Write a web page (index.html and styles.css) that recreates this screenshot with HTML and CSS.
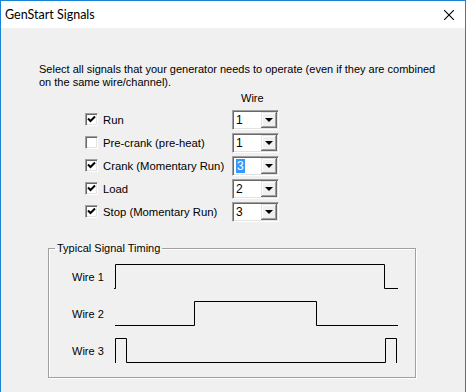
FILE: index.html
```html
<!DOCTYPE html>
<html lang="en">
<head>
    <meta charset="UTF-8">
    <title>GenStart Signals</title>
    <link rel="stylesheet" href="styles.css">
</head>
<body>
    <div class="window">
        <div class="titlebar">
            <span class="title">GenStart Signals</span>
            <svg class="close" width="10" height="10" viewBox="0 0 10 10">
                <path d="M0 0L10 10M10 0L0 10" stroke="#000" stroke-width="1.1" fill="none"/>
            </svg>
        </div>

        <div class="content">
            <p class="intro">Select all signals that your generator needs to operate (even if they are combined<br>on the same wire/channel).</p>
            <div class="wire-head">Wire</div>

            <ul class="sig-list">
                <li class="sig">
                    <span class="cb"><svg width="9" height="9" viewBox="0 0 9 9"><path d="M1 3.5L3.5 6L8 1.5" stroke="#000" stroke-width="2" fill="none"/></svg></span>
                    <span class="sig-name">Run</span>
                    <span class="combo"><span class="combo-val">1</span><span class="combo-btn"><i></i></span></span>
                </li>
                <li class="sig">
                    <span class="cb"></span>
                    <span class="sig-name">Pre-crank (pre-heat)</span>
                    <span class="combo"><span class="combo-val">1</span><span class="combo-btn"><i></i></span></span>
                </li>
                <li class="sig">
                    <span class="cb"><svg width="9" height="9" viewBox="0 0 9 9"><path d="M1 3.5L3.5 6L8 1.5" stroke="#000" stroke-width="2" fill="none"/></svg></span>
                    <span class="sig-name">Crank (Momentary Run)</span>
                    <span class="combo"><span class="combo-val"><span class="sel">3</span></span><span class="combo-btn"><i></i></span></span>
                </li>
                <li class="sig">
                    <span class="cb"><svg width="9" height="9" viewBox="0 0 9 9"><path d="M1 3.5L3.5 6L8 1.5" stroke="#000" stroke-width="2" fill="none"/></svg></span>
                    <span class="sig-name">Load</span>
                    <span class="combo"><span class="combo-val">2</span><span class="combo-btn"><i></i></span></span>
                </li>
                <li class="sig">
                    <span class="cb"><svg width="9" height="9" viewBox="0 0 9 9"><path d="M1 3.5L3.5 6L8 1.5" stroke="#000" stroke-width="2" fill="none"/></svg></span>
                    <span class="sig-name">Stop (Momentary Run)</span>
                    <span class="combo"><span class="combo-val">3</span><span class="combo-btn"><i></i></span></span>
                </li>
            </ul>

            <fieldset class="group">
                <legend>Typical Signal Timing</legend>
                <div class="wave-row">
                    <span class="wave-label">Wire 1</span>
                    <svg class="wave" width="284" height="27" viewBox="0 0 284 27">
                        <path d="M-1 25.5H0.5V1.5H269.5V25.5H283"/>
                    </svg>
                </div>
                <div class="wave-row">
                    <span class="wave-label">Wire 2</span>
                    <svg class="wave" width="284" height="27" viewBox="0 0 284 27">
                        <path d="M0 25.5H79.5V1.5H201.5V25.5H283"/>
                    </svg>
                </div>
                <div class="wave-row">
                    <span class="wave-label">Wire 3</span>
                    <svg class="wave" width="284" height="27" viewBox="0 0 284 27">
                        <path d="M0.5 26V1.5H11.5V25.5H270.5V1.5H281.5V26"/>
                    </svg>
                </div>
            </fieldset>
        </div>
    </div>
</body>
</html>
```

FILE: styles.css
```css
*{
    margin: 0;
    padding: 0;
    box-sizing: border-box;
}
ul{
    list-style: none;
}
body{
    width: 466px;
    height: 392px;
    overflow: hidden;
    font-family: "Liberation Sans", Arial, sans-serif;
    font-size: 11px;
    color: #000;
}
.window{
    height: 392px;
    border: 1px solid #1883d7;
    border-bottom: none;
    background: #f0f0f0;
}
.titlebar{
    height: 27px;
    background: #fff;
    display: flex;
    align-items: center;
    justify-content: space-between;
    padding: 0 11px 0 4px;
}
.title{
    font-family: Lato, "Noto Sans", sans-serif;
    font-size: 12.5px;
}
.content{
    padding-top: 35px;
}
.intro{
    padding-left: 38px;
    line-height: 13px;
}
.wire-head{
    margin: 3px 0 0 240px;
    line-height: 13px;
}
.sig-list{
    margin-top: 3px;
}
.sig{
    display: flex;
    align-items: center;
    height: 23px;
    padding-left: 84px;
}
.cb{
    width: 13px;
    height: 13px;
    background: #fff;
    border: 1px solid;
    border-color: #a0a0a0 #fff #fff #a0a0a0;
    box-shadow: inset 1px 1px 0 #696969, inset -1px -1px 0 #e3e3e3;
    display: flex;
    align-items: center;
    justify-content: center;
}
.cb svg{
    display: block;
}
.sig-name{
    width: 129px;
    margin-left: 5px;
    font-size: 11.3px;
}
.combo{
    width: 47px;
    height: 20px;
    background: #fff;
    border: 1px solid;
    border-color: #a0a0a0 #fff #fff #a0a0a0;
    box-shadow: inset 1px 1px 0 #696969, inset -1px -1px 0 #e3e3e3;
    display: flex;
    padding: 1px;
}
.combo-val{
    flex: 1;
    padding-left: 2px;
    line-height: 16px;
    font-size: 12px;
}
.sel{
    background: #3399ff;
    color: #fff;
    padding: 0 1px;
}
.combo-btn{
    width: 16px;
    height: 16px;
    background: #f0f0f0;
    box-shadow: inset -1px -1px 0 #696969, inset 1px 1px 0 #e3e3e3, inset -2px -2px 0 #a0a0a0, inset 2px 2px 0 #fff;
    display: flex;
    align-items: center;
    justify-content: center;
}
.combo-btn i{
    width: 0;
    height: 0;
    border-left: 4px solid transparent;
    border-right: 4px solid transparent;
    border-top: 4px solid #000;
    margin-top: 1px;
}
.group{
    margin: 19px 0 0 47px;
    width: 368px;
    border: 1px solid #a0a0a0;
    box-shadow: 1px 1px 0 #fff, inset 1px 1px 0 #fff;
    padding: 0 0 8px 6px;
    min-width: 0;
}
.group legend{
    padding: 0 2px;
    line-height: 13px;
}
.wave-row{
    display: flex;
    align-items: center;
    height: 37px;
    margin-left: 17px;
}
.wave-row:first-of-type{
    margin-top: 3px;
}
.wave-label{
    width: 43px;
}
.wave{
    display: block;
    overflow: visible;
}
.wave path{
    fill: none;
    stroke: #000;
    stroke-width: 1;
}
```
